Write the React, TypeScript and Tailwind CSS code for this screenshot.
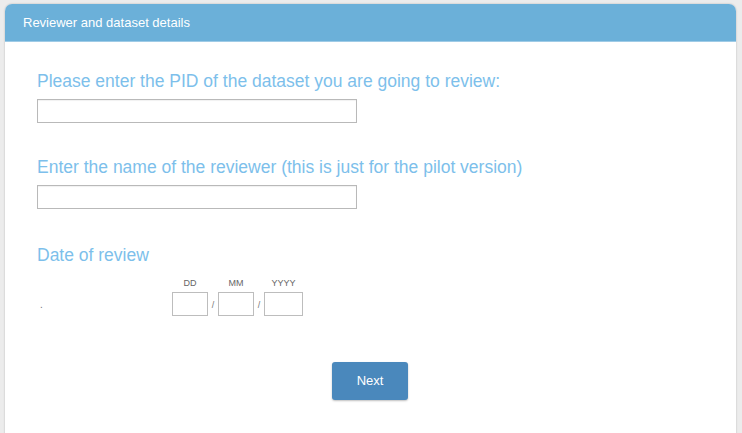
import React from 'react';

const font = { fontFamily: '"Liberation Sans", Arial, sans-serif' };

function Field({ label }: { label: string }) {
  return (
    <div className="flex flex-col">
      <label className="text-[17.5px] leading-[22px] text-[#7dbfeb]">{label}</label>
      <input
        type="text"
        className="mt-[7px] h-[24px] w-[320px] border border-[#b9b9b9] bg-white px-1 text-sm outline-none shadow-[inset_0_1px_1px_rgba(0,0,0,0.06)]"
      />
    </div>
  );
}

function DatePart({ label, width }: { label: string; width: string }) {
  return (
    <div className="flex flex-col items-center">
      <span className="text-[9px] leading-[10px] text-[#666]">{label}</span>
      <input type="text" className={`mt-[4px] h-[24px] ${width} border border-[#bdbdbd] bg-white outline-none`} />
    </div>
  );
}

export default function App() {
  return (
    <div className="min-h-screen bg-[#ececec] px-[5px] pt-[4px]" style={font}>
      <div className="w-[731px] overflow-hidden rounded-t-[7px] bg-white shadow-[0_0_2px_rgba(0,0,0,0.25)]">
        <div className="flex h-[38px] items-center border-b border-[#9fcbe6] bg-[#6bb0d9] px-[18px]">
          <span className="text-[13px] text-white">Reviewer and dataset details</span>
        </div>

        <div className="px-[32px] pt-[28px] pb-[40px]">
          <Field label="Please enter the PID of the dataset you are going to review:" />
          <div className="mt-[33px]">
            <Field label="Enter the name of the reviewer (this is just for the pilot version)" />
          </div>

          <div className="mt-[35px] text-[17.5px] leading-[22px] text-[#7dbfeb]">Date of review</div>

          <div className="mt-[12px] flex items-end">
            <span className="w-[135px] pb-[6px] pl-[3px] text-[10px] leading-[10px] text-[#777]">.</span>
            <div className="flex items-end">
              <DatePart label="DD" width="w-[36px]" />
              <span className="w-[10px] pb-[4px] text-center text-[9px] text-[#777]">/</span>
              <DatePart label="MM" width="w-[36px]" />
              <span className="w-[10px] pb-[4px] text-center text-[9px] text-[#777]">/</span>
              <DatePart label="YYYY" width="w-[39px]" />
            </div>
          </div>

          <div className="mt-[46px] pl-[295px]">
            <button className="h-[38px] w-[76px] rounded-[3px] bg-[#4a88bc] text-[13px] text-white shadow-[0_1px_2px_rgba(0,0,0,0.25)]">
              Next
            </button>
          </div>
        </div>
      </div>
    </div>
  );
}
